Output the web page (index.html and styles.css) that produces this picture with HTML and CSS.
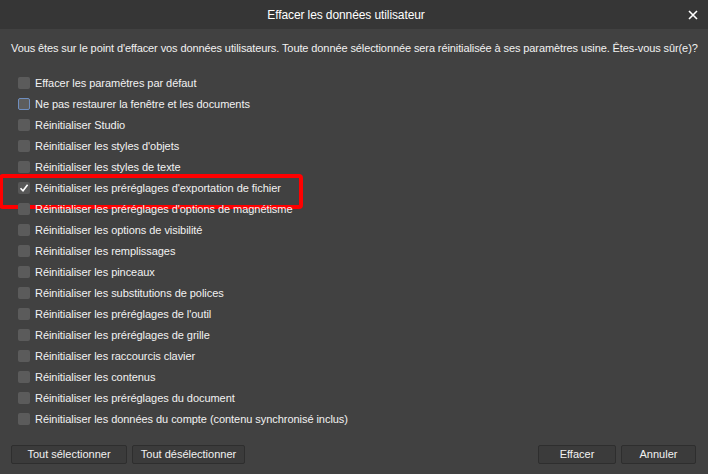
FILE: index.html
```html
<!DOCTYPE html>
<html lang="fr">
<head>
<meta charset="utf-8">
<title>Effacer les données utilisateur</title>
<link rel="stylesheet" href="styles.css">
</head>
<body>
<div class="dialog">
  <header class="titlebar">
    <span class="title">Effacer les données utilisateur</span>
    <button class="close" aria-label="Fermer">
      <svg width="10" height="10" viewBox="0 0 10 10"><path d="M1 1 L9 9 M9 1 L1 9" stroke="#ffffff" stroke-width="1.6" fill="none"/></svg>
    </button>
  </header>
  <main class="content">
    <p class="intro">Vous êtes sur le point d'effacer vos données utilisateurs. Toute donnée sélectionnée sera réinitialisée à ses paramètres usine. Êtes-vous sûr(e)?</p>
    <ul class="options">
      <li class="opt"><span class="box"></span>Effacer les paramètres par défaut</li>
      <li class="opt"><span class="box focus"></span>Ne pas restaurer la fenêtre et les documents</li>
      <li class="opt"><span class="box"></span>Réinitialiser Studio</li>
      <li class="opt"><span class="box"></span>Réinitialiser les styles d'objets</li>
      <li class="opt"><span class="box"></span>Réinitialiser les styles de texte</li>
      <li class="opt highlighted"><span class="box checked"><svg width="10" height="10" viewBox="0 0 10 10"><path d="M1.5 5.2 L4 7.8 L8.6 1.8" stroke="#ffffff" stroke-width="1.6" fill="none"/></svg></span>Réinitialiser les préréglages d'exportation de fichier</li>
      <li class="opt"><span class="box"></span>Réinitialiser les préréglages d'options de magnétisme</li>
      <li class="opt"><span class="box"></span>Réinitialiser les options de visibilité</li>
      <li class="opt"><span class="box"></span>Réinitialiser les remplissages</li>
      <li class="opt"><span class="box"></span>Réinitialiser les pinceaux</li>
      <li class="opt"><span class="box"></span>Réinitialiser les substitutions de polices</li>
      <li class="opt"><span class="box"></span>Réinitialiser les préréglages de l'outil</li>
      <li class="opt"><span class="box"></span>Réinitialiser les préréglages de grille</li>
      <li class="opt"><span class="box"></span>Réinitialiser les raccourcis clavier</li>
      <li class="opt"><span class="box"></span>Réinitialiser les contenus</li>
      <li class="opt"><span class="box"></span>Réinitialiser les préréglages du document</li>
      <li class="opt"><span class="box"></span>Réinitialiser les données du compte (contenu synchronisé inclus)</li>
    </ul>
  </main>
  <footer class="actions">
    <div class="group">
      <button class="btn w-sel">Tout sélectionner</button>
      <button class="btn w-desel">Tout désélectionner</button>
    </div>
    <div class="group">
      <button class="btn w-eff">Effacer</button>
      <button class="btn w-ann">Annuler</button>
    </div>
  </footer>
</div>
</body>
</html>
```
FILE: styles.css
```css
* { box-sizing: border-box; }
html, body { margin: 0; padding: 0; }
body {
  width: 708px;
  height: 474px;
  background: #414141;
  font-family: "Liberation Sans", Arial, sans-serif;
  color: #f2f2f2;
  overflow: hidden;
}
.dialog {
  display: flex;
  flex-direction: column;
  height: 474px;
}
.titlebar {
  position: relative;
  height: 29px;
  padding-right: 16px;
  background: #363636;
  display: flex;
  align-items: center;
  justify-content: center;
}
.title {
  font-size: 12px;
  letter-spacing: -0.1px;
  color: #ffffff;
}
.close {
  position: absolute;
  right: 9px;
  top: 9px;
  width: 12px;
  height: 12px;
  padding: 0;
  border: 0;
  background: transparent;
  display: flex;
  align-items: center;
  justify-content: center;
}
.content {
  flex: 1;
  padding: 11px 11px 0 11px;
}
.intro {
  margin: 0 0 15px 0;
  font-size: 11px;
  letter-spacing: -0.1px;
  line-height: 17px;
  white-space: nowrap;
}
.options {
  list-style: none;
  margin: 0;
  padding: 0;
  display: flex;
  flex-direction: column;
}
.opt {
  position: relative;
  height: 21px;
  display: flex;
  align-items: center;
  padding-left: 7px;
  font-size: 11px;
  letter-spacing: -0.05px;
}
.box {
  width: 12px;
  height: 12px;
  border-radius: 2px;
  background: #5b5b5b;
  margin-right: 5px;
  flex: none;
  display: flex;
  align-items: center;
  justify-content: center;
}
.box.focus {
  border: 1px solid #6f8fc0;
  background: #5d5d5d;
}
.box.checked { background: #575757; }
.highlighted::before {
  content: "";
  position: absolute;
  left: -12px;
  top: -3px;
  width: 296px;
  height: 27px;
  border: 4px solid #ff0000;
  border-radius: 4px;
  pointer-events: none;
}
.actions {
  display: flex;
  justify-content: space-between;
  padding: 0 12px 10px 11px;
}
.group { display: flex; gap: 5px; }
.btn {
  height: 19px;
  padding: 0;
  background: #3b3b3b;
  border: 1px solid #2e2e2e;
  border-radius: 2px;
  color: #f2f2f2;
  font-family: inherit;
  font-size: 11px;
  line-height: 17px;
}
.w-sel { width: 116px; }
.w-desel { width: 113px; }
.w-eff { width: 78px; }
.w-ann { width: 75px; }
```
